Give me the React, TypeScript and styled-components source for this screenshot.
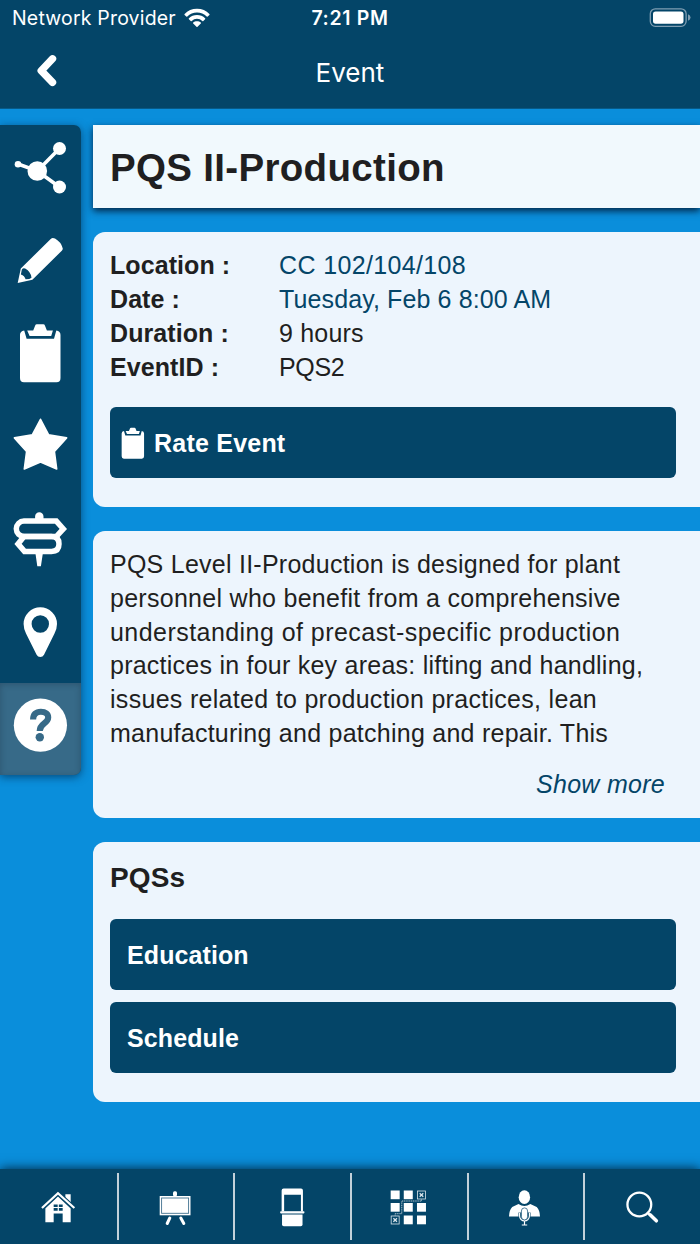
import React from "react";
import styled, { createGlobalStyle } from "styled-components";

const navy = "#044568";
const blue = "#0a8edb";
const ink = "#1f1f21";

const GlobalStyle = createGlobalStyle`
  * { box-sizing: border-box; }
  body { margin: 0; background: ${blue}; }
  svg { display: block; flex: none; }
`;

const Screen = styled.div`
  width: 700px;
  height: 1244px;
  display: flex;
  flex-direction: column;
  overflow: hidden;
  background: ${blue};
  color: ${ink};
  font-family: "Liberation Sans", Arial, sans-serif;
  font-size: 25px;
`;

const Header = styled.header`
  height: 109px;
  flex: none;
  background: ${navy};
  color: #fff;
  font-family: Inter, sans-serif;
  border-bottom: 1px solid #075a88;
`;

const StatusBar = styled.div`
  height: 36px;
  padding: 0 9px;
  display: grid;
  grid-template-columns: 1fr auto 1fr;
  align-items: center;
  font-size: 19.5px;
`;

const Carrier = styled.div`
  display: flex;
  align-items: center;
  gap: 8px;
  padding-left: 3px;
  letter-spacing: 0.18px;
  white-space: nowrap;
`;

const Clock = styled.div`
  font-weight: 600;
  letter-spacing: 0.65px;
`;

const BatterySlot = styled.div`
  display: flex;
  justify-content: flex-end;
`;

const TitleBar = styled.div`
  height: 72px;
  display: grid;
  grid-template-columns: 93px 1fr 93px;
  align-items: center;
  text-align: center;
  font-size: 26px;
`;

const BackButton = styled.button`
  border: 0;
  padding: 0;
  background: none;
`;

const Main = styled.main`
  flex: 1;
  display: flex;
  align-items: flex-start;
  gap: 12px;
  padding-top: 16px;
`;

const Rail = styled.nav`
  width: 81px;
  height: 650px;
  overflow: hidden;
  border-radius: 0 7px 7px 0;
  background: ${navy};
`;

const RailShadow = styled.div`
  border-radius: 0 7px 7px 0;
  box-shadow: 0 2px 9px rgba(0, 30, 60, 0.6);
`;

const RailItem = styled.div<{ $active?: boolean }>`
  height: 93px;
  background: ${(p) => (p.$active ? "#376a88" : "transparent")};
  box-shadow: ${(p) => (p.$active ? "inset 0 1px 6px rgba(30, 50, 70, 0.4)" : "none")};
`;

const Content = styled.div`
  flex: 1;
  display: flex;
  flex-direction: column;
  gap: 24px;
`;

const PageTitle = styled.h1`
  margin: 0;
  height: 83px;
  padding: 2px 17px 0;
  display: flex;
  align-items: center;
  background: #f1f9fd;
  box-shadow: 0 3px 7px rgba(0, 20, 45, 0.85);
  font-size: 38.5px;
  letter-spacing: 0.32px;
`;

const Card = styled.section<{ $height: number; $top: number }>`
  height: ${(p) => p.$height}px;
  padding: ${(p) => p.$top}px 24px 0 17px;
  border-radius: 12px 0 0 12px;
  background: #edf5fd;
`;

const Details = styled.dl`
  margin: 0 0 22.4px;
  display: grid;
  grid-template-columns: 169px 1fr;
  line-height: 33.9px;
`;

const Label = styled.dt`
  font-weight: 700;
  letter-spacing: 0.08px;
`;

const Value = styled.dd<{ $link?: boolean; $track?: number }>`
  margin: 0;
  color: ${(p) => (p.$link ? navy : ink)};
  letter-spacing: ${(p) => p.$track ?? 0}px;
`;

const ActionButton = styled.button<{ $icon?: boolean }>`
  width: 100%;
  height: 71px;
  margin: 0 0 12px;
  padding: 0 ${(p) => (p.$icon ? 10 : 17)}px;
  display: flex;
  align-items: center;
  gap: 8px;
  border: 0;
  border-radius: 6px;
  background: ${navy};
  color: #fff;
  font: inherit;
  font-weight: 700;
  letter-spacing: ${(p) => (p.$icon ? 0.22 : 0.1)}px;
`;

const ButtonLabel = styled.span`
  padding-top: 1px;
`;

const Description = styled.p`
  margin: 0;
  line-height: 33.83px;
`;

const Line = styled.span<{ $track: number }>`
  display: block;
  white-space: nowrap;
  letter-spacing: ${(p) => p.$track}px;
`;

const ShowMore = styled.div`
  margin-top: 16.4px;
  padding-right: 11px;
  text-align: right;
  font-style: italic;
  line-height: 34px;
  letter-spacing: 0.28px;
  color: ${navy};
`;

const SectionTitle = styled.h2`
  margin: 0 0 24px;
  font-size: 28px;
  line-height: 35px;
  letter-spacing: 0.1px;
`;

const TabBar = styled.footer`
  height: 75px;
  flex: none;
  display: grid;
  grid-template-columns: repeat(6, 1fr);
  background: ${navy};
  box-shadow: 0 0 11px rgba(0, 25, 45, 0.95);
`;

const Tab = styled.div`
  display: flex;
  align-items: center;
  justify-content: center;
  position: relative;
  & + &::before {
    content: "";
    position: absolute;
    left: 0;
    top: 4px;
    width: 2px;
    height: 67px;
    background: #c3d1da;
  }
`;

const RailIcon = ({ index, children }: { index: number; children: React.ReactNode }) => (
  <svg width="81" height="93" viewBox={`0 ${125 + index * 93} 81 93`} fill="#fff">
    {children}
  </svg>
);

const TabIcon = ({ cx, children }: { cx: number; children: React.ReactNode }) => (
  <Tab>
    <svg width="48" height="48" viewBox={`${cx - 24} 1182.5 48 48`} fill="#fff">
      {children}
    </svg>
  </Tab>
);

const ClipboardShape = () => (
  <>
    <path d="M24.2 330.4 L26.6 338.8 H54 L56.3 330.4 Q60.5 331 60.5 335 V378 Q60.5 382.3 56.5 382.3 H24 Q20 382.3 20 378 V335 Q20 331 24.2 330.4Z" />
    <path d="M27.2 330.4 H33.2 L35.2 325.4 Q35.6 324.3 36.8 324.3 H43.3 Q44.5 324.3 44.9 325.4 L46.9 330.4 H52.9 L51.2 336 H29.6Z" />
  </>
);

const MazeX = ({ x, y }: { x: number; y: number }) => (
  <g stroke="#dce6ec" fill="none">
    <rect x={x + 0.5} y={y + 0.5} width="8" height="8" strokeWidth="0.8" />
    <path d={`M${x + 2.7} ${y + 2.7}l3.6 3.6m0 -3.6l-3.6 3.6`} strokeWidth="1.3" />
  </g>
);

const descriptionLines = [
  { text: "PQS Level II-Production is designed for plant", track: 0.25 },
  { text: "personnel who benefit from a comprehensive", track: 0.28 },
  { text: "understanding of precast-specific production", track: 0.45 },
  { text: "practices in four key areas: lifting and handling,", track: 0.24 },
  { text: "issues related to production practices, lean", track: 0.3 },
  { text: "manufacturing and patching and repair. This", track: 0.25 },
];

export default function App() {
  return (
    <Screen>
      <GlobalStyle />
      <Header>
        <StatusBar>
          <Carrier>
            Network Provider
            <svg width="26" height="20" viewBox="184 7 26 20" fill="#fff">
              <path d="M197 7.8c4.9 0 9.3 1.9 12.4 5.1.3.3.3.7 0 1l-1.7 1.7c-.3.3-.7.3-1 0-2.6-2.6-6-4-9.7-4s-7.1 1.4-9.7 4c-.3.3-.7.3-1 0l-1.7-1.7c-.3-.3-.3-.7 0-1 3.1-3.2 7.5-5.1 12.4-5.1z" />
              <path d="M197 14c3.2 0 6 1.2 8.1 3.2.3.3.3.7 0 1l-1.8 1.7c-.3.3-.7.3-1 0a7.8 7.8 0 0 0-10.6 0c-.3.3-.7.3-1 0l-1.8-1.7c-.3-.3-.3-.7 0-1A11.7 11.7 0 0 1 197 14z" />
              <path d="M197 20.2c1.5 0 2.8.5 3.8 1.4.3.3.3.7 0 1l-3.3 3.2c-.3.3-.7.3-1 0l-3.3-3.2c-.3-.3-.3-.7 0-1 1-.9 2.3-1.4 3.8-1.4z" />
            </svg>
          </Carrier>
          <Clock>7:21 PM</Clock>
          <BatterySlot>
            <svg width="42" height="20" viewBox="649 7.5 42 20">
              <rect x="650.3" y="8.3" width="35.8" height="17.5" rx="5" fill="none" stroke="#7f9eb2" strokeWidth="1.3" />
              <rect x="653" y="11" width="30.5" height="12.2" rx="2.6" fill="#fff" />
              <path d="M688 13.8q2.5 1 2.5 3.2t-2.5 3.2z" fill="#7f9eb2" />
            </svg>
          </BatterySlot>
        </StatusBar>
        <TitleBar>
          <BackButton aria-label="Back">
            <svg width="93" height="50" viewBox="0 47 93 50" fill="none">
              <path d="M52.5 58.8L41.2 70.7L52.5 82.3" stroke="#fff" strokeWidth="7.4" strokeLinecap="round" strokeLinejoin="round" />
            </svg>
          </BackButton>
          <span>Event</span>
        </TitleBar>
      </Header>

      <Main>
        <RailShadow>
          <Rail>
            <RailItem>
              <RailIcon index={0}>
                <path d="M18 164L37.3 171L59.5 148.5M37.3 171L59.5 187" fill="none" stroke="#fff" strokeWidth="3.6" />
                <circle cx="18" cy="164.3" r="3.3" />
                <circle cx="37.3" cy="171" r="9.8" />
                <circle cx="59.5" cy="148.5" r="6.5" />
                <circle cx="59.5" cy="187" r="6.5" />
              </RailIcon>
            </RailItem>
            <RailItem>
              <RailIcon index={1}>
                <path d="M17.7 282.9L20.8 268.6L50.7 238.9Q52.5 237.5 55 238.6Q61 242 62.7 248.2Q63 249.6 61.8 250.7L32.4 279.8Z" />
                <path d="M21.8 269.8Q22.4 267.6 25.2 268.6Q31 272 31.5 277.7L29.3 279L25.6 279.2Q24.6 275.6 20.9 274.4Z" fill={navy} />
              </RailIcon>
            </RailItem>
            <RailItem>
              <RailIcon index={2}>
                <ClipboardShape />
              </RailIcon>
            </RailItem>
            <RailItem>
              <RailIcon index={3}>
                <path
                  d="M40.5 419.3L48.5 434.7L66.6 437.9L54.4 451.5L56.7 469L40.5 462L24.3 469L26.6 451.5L14.4 437.9L32.4 434.7Z"
                  stroke="#fff" strokeWidth="1.6" strokeLinejoin="round"
                />
              </RailIcon>
            </RailItem>
            <RailItem>
              <RailIcon index={4}>
                <g fill="none" stroke="#fff" strokeWidth="5.5">
                  <path d="M24 521.1H56.3L63.3 528.9L56.3 536.5H24A7.7 7.7 0 0 1 24 521.1Z" />
                  <path d="M51.5 536.5H24L18 543.9L24.5 551.4H51.5Q59 551.4 59 544Q59 536.5 51.5 536.5Z" />
                </g>
                <path d="M35.1 520V516.5A4.2 4.2 0 0 1 43.5 516.5V520ZM35.4 553H42.9L40.9 566.3H37.3Z" />
              </RailIcon>
            </RailItem>
            <RailItem>
              <RailIcon index={5}>
                <path
                  fillRule="evenodd"
                  d="M40.3 607.3A16.7 16.7 0 0 1 57 624Q57 628.5 54.5 633.5L44 654.7Q42.8 657 40.3 657T36.6 654.7L26 633.5Q23.6 628.5 23.6 624A16.7 16.7 0 0 1 40.3 607.3ZM40.3 615.3A8.7 8.7 0 1 0 40.3 632.7A8.7 8.7 0 1 0 40.3 615.3Z"
                />
              </RailIcon>
            </RailItem>
            <RailItem $active>
              <RailIcon index={6}>
                <circle cx="40.4" cy="725.2" r="26.6" />
                <path d="M33.1 719.6C33.1 714.5 35.8 711.7 40.9 711.7C45.6 711.7 48.2 714 48.2 717.5C48.2 723.6 39.7 723 39.7 731" fill="none" stroke="#376a88" strokeWidth="6.1" />
                <circle cx="39.8" cy="737.3" r="4.2" fill="#376a88" />
              </RailIcon>
            </RailItem>
          </Rail>
        </RailShadow>

        <Content>
          <PageTitle>PQS II-Production</PageTitle>

          <Card $height={275} $top={17}>
            <Details>
              <Label>Location :</Label>
              <Value $link $track={0.36}>CC 102/104/108</Value>
              <Label>Date :</Label>
              <Value $link $track={0.12}>Tuesday, Feb 6 8:00 AM</Value>
              <Label>Duration :</Label>
              <Value $track={0.2}>9 hours</Value>
              <Label>EventID :</Label>
              <Value $track={-0.35}>PQS2</Value>
            </Details>
            <ActionButton $icon>
              <svg width="26" height="32" viewBox="17 323 47 60" preserveAspectRatio="none" fill="#fff">
                <ClipboardShape />
              </svg>
              <ButtonLabel>Rate Event</ButtonLabel>
            </ActionButton>
          </Card>

          <Card $height={287} $top={17}>
            <Description>
              {descriptionLines.map((line) => (
                <Line key={line.text} $track={line.track}>{line.text}</Line>
              ))}
            </Description>
            <ShowMore>Show more</ShowMore>
          </Card>

          <Card $height={260} $top={18}>
            <SectionTitle>PQSs</SectionTitle>
            <ActionButton><ButtonLabel>Education</ButtonLabel></ActionButton>
            <ActionButton><ButtonLabel>Schedule</ButtonLabel></ActionButton>
          </Card>
        </Content>
      </Main>

      <TabBar>
        <TabIcon cx={58.33}>
          <path d="M65.7 1193.7H71V1204L65.7 1199Z" />
          <path d="M58.3 1196L71 1208V1221.7H63V1213H54V1221.7H45.7V1208Z" />
          <path d="M42.3 1207.5L58.3 1192.5L74.7 1207.5" fill="none" stroke={navy} strokeWidth="4" />
          <path d="M42.3 1207.5L58.3 1192.7L74.7 1207.5" fill="none" stroke="#fff" strokeWidth="2.2" />
          <path d="M54 1204H58V1206.5H54ZM59.2 1204H63V1206.5H59.2ZM54 1207.6H58V1210.3H54ZM59.2 1207.6H63V1210.3H59.2Z" fill={navy} />
        </TabIcon>
        <TabIcon cx={175}>
          <rect x="173" y="1190.7" width="4" height="5" rx="1.5" />
          <rect x="159.7" y="1195.5" width="30.8" height="19.3" />
          <rect x="161.6" y="1197.5" width="27" height="15.3" fill="none" stroke="#41718f" strokeWidth="0.9" />
          <path d="M169.8 1217.5L167.2 1223M180.8 1217.5L183.8 1223" stroke="#fff" strokeWidth="3" strokeLinecap="round" />
        </TabIcon>
        <TabIcon cx={291.67}>
          <path fillRule="evenodd" d="M283.3 1188H300.7Q302.6 1188 302.6 1190V1211H281.3V1190Q281.3 1188 283.3 1188ZM283.8 1194.3V1210.7H300.6V1194.3Z" />
          <rect x="279.8" y="1210.7" width="24.3" height="2.2" rx="0.8" />
          <path d="M281.7 1214H302.2V1224Q302.2 1225.7 300.5 1225.7H283.5Q281.7 1225.7 281.7 1224Z" />
        </TabIcon>
        <TabIcon cx={408.33}>
          <rect x="391" y="1190" width="9" height="8.7" />
          <rect x="404.1" y="1190" width="9" height="8.7" />
          <rect x="391" y="1202.5" width="9" height="8.7" />
          <rect x="404.1" y="1202.5" width="9" height="8.7" />
          <rect x="417.3" y="1202.5" width="9" height="8.7" />
          <rect x="404.1" y="1215" width="9" height="8.8" />
          <rect x="417.3" y="1215" width="9" height="8.8" />
          <MazeX x={417.3} y={1190} />
          <MazeX x={391} y={1215} />
          <path d="M421.8 1199V1200.5H402.1V1213.2H395.5V1215" fill="none" stroke="#c3d1da" strokeWidth="0.9" strokeDasharray="1.2 0.6" />
        </TabIcon>
        <TabIcon cx={525}>
          <ellipse cx="524.4" cy="1196.7" rx="5.7" ry="6.9" />
          <path d="M518.5 1203.5Q524.4 1207.5 530.3 1203.5L536.7 1206.5Q539.8 1209.5 540 1216H509Q509.2 1209.5 512.2 1206.5Z" />
          <path d="M519.3 1212V1215.5A5.2 5.2 0 0 0 529.7 1215.5V1212" fill={navy} stroke={navy} strokeWidth="1.6" />
          <path d="M519.6 1212V1215.5A4.9 4.9 0 0 0 529.4 1215.5V1212M524.5 1220.5V1224.3M521.8 1224.5H527.2" fill="none" stroke="#fff" strokeWidth="1.2" />
          <rect x="521.4" y="1207.4" width="6.2" height="12" rx="3.1" stroke="#41718f" strokeWidth="0.9" />
        </TabIcon>
        <TabIcon cx={641.67}>
          <circle cx="639" cy="1204" r="11.9" fill="none" stroke="#fff" strokeWidth="2.3" />
          <path d="M647.4 1212.4L649.5 1214.5" stroke="#fff" strokeWidth="2.4" />
          <path d="M649.8 1214.3L656 1220.3" stroke="#fff" strokeWidth="3.6" strokeLinecap="round" />
        </TabIcon>
      </TabBar>
    </Screen>
  );
}
